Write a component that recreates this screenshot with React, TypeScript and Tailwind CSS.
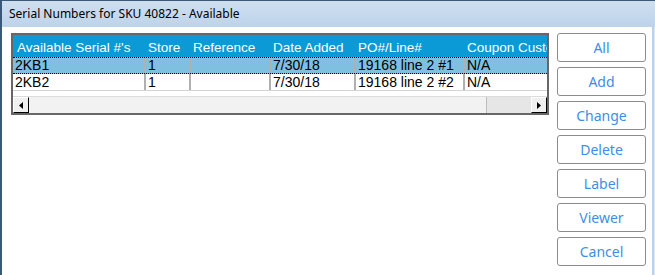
import React from "react";

const cols = [
  { w: 131, h: "Available Serial #'s" },
  { w: 45, h: "Store" },
  { w: 80, h: "Reference" },
  { w: 85, h: "Date Added" },
  { w: 109, h: "PO#/Line#" },
  { w: 120, h: "Coupon Customer" },
];

const rows = [
  ["2KB1", "1", "", "7/30/18", "19168 line 2 #1", "N/A"],
  ["2KB2", "1", "", "7/30/18", "19168 line 2 #2", "N/A"],
];

const buttons = ["All", "Add", "Change", "Delete", "Label", "Viewer", "Cancel"];

export default function App() {
  return (
    <div className="w-[655px] h-[275px] flex flex-col bg-white overflow-hidden">
      <div className="h-[27px] shrink-0 flex items-center pl-[7px] border-t border-l-2 border-[#3b5878] bg-gradient-to-b from-[#cfdff0] to-[#bdd3ea] text-[12px] text-black" style={{ fontFamily: '"Noto Sans", sans-serif' }}>
        <span className="pb-[1px]">Serial Numbers for SKU 40822 - Available</span>
      </div>
      <div className="flex-1 flex border-l-2 border-[#3b5878]">
        <div className="flex-1 flex pl-[9px] pt-[6px] pr-[4px] border-r-2 border-[#b9d1ea]">
          <div className="w-[538px] h-[82px] border-2 border-[#676767] flex flex-col overflow-hidden" style={{ fontFamily: '"Liberation Sans", Arial, sans-serif' }}>
            <div className="flex h-[22px] bg-[#0b9ad6] text-white text-[13.5px] shrink-0">
              {cols.map((c, i) => (
                <div key={i} className="shrink-0 pl-[4px] pt-[3px] whitespace-nowrap overflow-hidden" style={{ width: c.w }}>
                  {c.h}
                </div>
              ))}
            </div>
            {rows.map((r, ri) => (
              <div key={ri} className={ri === 0 ? "flex h-[17px] bg-[#7fbfe0] border-y border-dotted border-black text-[14px] leading-[15px] text-black shrink-0" : "flex h-[17px] bg-white border-b border-[#d4d4d4] text-[14px] leading-[16px] text-black shrink-0"}>
                {r.map((v, i) => (
                  <div key={i} className={i === 0 ? "shrink-0 pl-[2px] whitespace-nowrap" : "shrink-0 pl-[2px] whitespace-nowrap border-l-2 border-[#b0b0b0]"} style={{ width: cols[i].w }}>
                    {v}
                  </div>
                ))}
              </div>
            ))}
            <div className="flex-1 bg-white" />
            <div className="h-[17px] shrink-0 flex bg-[#e6e6e6] border-t border-[#dcdcdc]">
              <div className="w-[16px] h-full bg-[#f0f0f0] border-t border-l border-white border-r border-b border-r-black border-b-black flex items-center justify-center">
                <svg width="4" height="7" viewBox="0 0 4 7"><path d="M4 0 L0 3.5 L4 7 Z" fill="#000" /></svg>
              </div>
              <div className="w-[458px] h-full bg-[#f2f2f2] border-r border-[#bdbdbd]" />
              <div className="flex-1" />
              <div className="w-[16px] h-full bg-[#f0f0f0] border-t border-l border-white border-r border-b border-r-black border-b-black flex items-center justify-center">
                <svg width="4" height="7" viewBox="0 0 4 7"><path d="M0 0 L4 3.5 L0 7 Z" fill="#000" /></svg>
              </div>
            </div>
          </div>
          <div className="ml-[8px] flex flex-col gap-[5px] w-[89px]">
            {buttons.map((b) => (
              <div key={b} className="h-[29px] rounded-[3px] border border-[#8c8c8c] bg-white flex items-center justify-center text-[14px] text-[#3d8ee8]" style={{ fontFamily: '"Noto Sans", sans-serif' }}>
                {b}
              </div>
            ))}
          </div>
        </div>
        <div className="w-[1px] bg-[#dfe8f2]" />
      </div>
    </div>
  );
}
